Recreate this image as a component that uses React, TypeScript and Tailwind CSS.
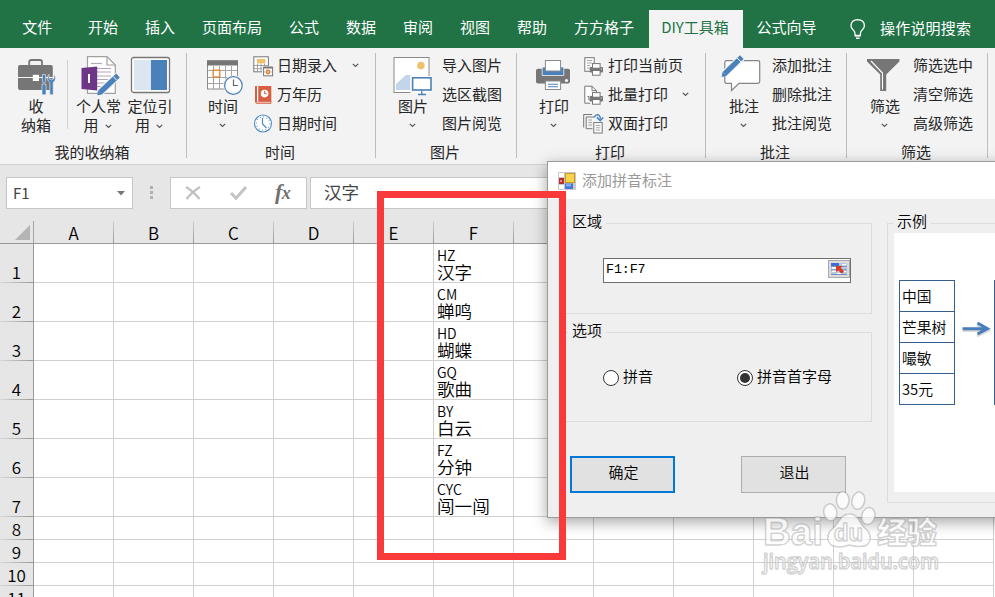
import type { ReactNode } from "react";
import clsx from "clsx";

const tabs = [
  { label: "文件", cls: "w-[74.5px]" },
  { label: "开始", cls: "w-[57px]" },
  { label: "插入", cls: "w-[57px]" },
  { label: "页面布局", cls: "w-[87px]" },
  { label: "公式", cls: "w-[57px]" },
  { label: "数据", cls: "w-[57px]" },
  { label: "审阅", cls: "w-[57px]" },
  { label: "视图", cls: "w-[57px]" },
  { label: "帮助", cls: "w-[57px]" },
  { label: "方方格子", cls: "w-[87px]" },
  { label: "DIY工具箱", cls: "w-[94px] ml-[1.5px] pr-[2px]", active: true },
  { label: "公式向导", cls: "w-[87px]" },
];

const columns = ["A", "B", "C", "D", "E", "F", "G", "H", "I", "J", "K", "L"];

const rows = [
  { n: 1, py: "HZ", text: "汉字" },
  { n: 2, py: "CM", text: "蝉鸣" },
  { n: 3, py: "HD", text: "蝴蝶" },
  { n: 4, py: "GQ", text: "歌曲" },
  { n: 5, py: "BY", text: "白云" },
  { n: 6, py: "FZ", text: "分钟" },
  { n: 7, py: "CYC", text: "闯一闯" },
  { n: 8 },
  { n: 9 },
  { n: 10 },
  { n: 11 },
];

function Chevron({ className }: { className?: string }) {
  return (
    <svg width="7" height="5" viewBox="0 0 7 5" className={clsx("shrink-0", className)}>
      <path d="M0.8 0.8 L3.5 3.5 L6.2 0.8" fill="none" stroke="#555" strokeWidth="1.2" />
    </svg>
  );
}

function Pencil({ d = "M22 36 L38 20" }: { d?: string }) {
  return (
    <>
      <path d={d} stroke="#f3f3f3" strokeWidth="7.5" />
      <path d={d} stroke="#4a81bb" strokeWidth="5.2" />
    </>
  );
}

function BigIcon({ children }: { children: ReactNode }) {
  return (
    <svg width="40" height="40" viewBox="0 0 40 40" fill="none" className="shrink-0 overflow-visible">
      {children}
    </svg>
  );
}

function SmallIcon({ children }: { children: ReactNode }) {
  return (
    <svg width="20" height="20" viewBox="0 0 20 20" fill="none" className="shrink-0 overflow-visible">
      {children}
    </svg>
  );
}

function ToolboxIcon() {
  return (
    <BigIcon>
      <path d="M13.2 9V6.2Q13.2 4 15.4 4H23.8Q26 4 26 6.2V9" stroke="#767676" strokeWidth="1.8" />
      <rect x="2" y="9" width="34.8" height="25" rx="2" fill="#767676" />
      <path d="M2 21.5H37" stroke="#f3f3f3" strokeWidth="1.2" />
      <rect x="16.8" y="18.8" width="6.2" height="6.2" fill="#fff" />
      <path d="M25 17H40V40H25Z" fill="#f3f3f3" />
      <path d="M25 17H36.8V34H25Z" fill="#767676" />
      <path d="M25 21.5H37" stroke="#f3f3f3" strokeWidth="1.2" />
      <path d="M26.4 18.5H29.6V25L28.9 26V28.5H30V38.8H26V28.5H27.1V26L26.4 25Z" fill="#4a81bb" stroke="#f3f3f3" strokeWidth="0.6" />
      <path d="M33 18.3Q31.2 20 31.5 23Q31.9 25.4 33.8 26.3V38.8H37.2V26.3Q39.4 25.2 39.5 22.5Q39.6 20 38 18.3V22.5L35.5 24L33 22.5Z" fill="#4a81bb" stroke="#f3f3f3" strokeWidth="0.6" />
    </BigIcon>
  );
}

function NoteIcon() {
  return (
    <BigIcon>
      <path d="M8.5 0.7H28L36.3 9V37.4H8.5Z" fill="#fff" stroke="#a0a0a0" strokeWidth="1.2" />
      <path d="M28 0.7V9H36.3" stroke="#a0a0a0" strokeWidth="1.2" />
      <path d="M12 7.5H23" stroke="#b3a5bb" strokeWidth="1.2" />
      <path d="M18 12.5H32M18 16H32M18 20H32M18 23.5H29M18 27H26M18 30.5H22" stroke="#b3a5bb" strokeWidth="1.2" />
      <path d="M2.5 12L18.2 10.5V34.5L2.5 33Z" fill="#6d3688" />
      <path d="M10 18V27" stroke="#fff" strokeWidth="2" />
      <Pencil d="M21 36.5L39 19.5" />
      <path d="M34.3 20.6L37.7 24.2" stroke="#fff" strokeWidth="1" />
      <path d="M19 34.5L23 38.5L18.3 39.3Z" fill="#4a81bb" />
    </BigIcon>
  );
}

function PaneIcon() {
  return (
    <BigIcon>
      <rect x="1.5" y="1.5" width="38" height="35" rx="2" fill="#fff" stroke="#767676" strokeWidth="1.3" />
      <path d="M4 4H21V34H4Z" fill="#dce6f1" />
      <path d="M21 4H37V34H21Z" fill="#4a81bb" />
    </BigIcon>
  );
}

function CalendarIcon() {
  return (
    <BigIcon>
      <rect x="4.5" y="5" width="30" height="28" fill="#fff" stroke="#8a8a8a" />
      <path d="M4 4.3H35V9.5H4Z" fill="#767676" />
      <path d="M10.5 10V33M16.5 10V33M22.5 10V33M28.5 10V33M5 14.5H34M5 21.5H34M5 27.5H34" stroke="#a3a3a3" />
      <rect x="10.2" y="14.2" width="6.6" height="6.8" fill="#fff" stroke="#e8822c" strokeWidth="1.3" />
      <circle cx="30.4" cy="29.5" r="10.2" fill="#f3f3f3" />
      <circle cx="30.4" cy="29.5" r="8.8" fill="#fff" stroke="#4a81bb" strokeWidth="1.2" />
      <path d="M30.5 23.5V29.5H35" stroke="#666" strokeWidth="1.2" />
    </BigIcon>
  );
}

function PictureIcon() {
  return (
    <BigIcon>
      <rect x="1" y="1.5" width="35" height="35" fill="#fff" stroke="#8a8a8a" />
      <circle cx="27.9" cy="9.6" r="3.8" fill="#efc16b" />
      <path d="M3 34V28L13 19H17.5V34Z" fill="#c2d5ea" />
      <path d="M17.5 20H40V39H17.5Z" fill="#f3f3f3" />
      <path d="M17.5 20H36V36.5H17.5Z" fill="#fff" />
      <rect x="19.6" y="21.8" width="18.4" height="12.2" fill="#fff" stroke="#4a81bb" strokeWidth="1.6" />
      <path d="M28.8 34V38M25 38.5H33" stroke="#4a81bb" strokeWidth="1.3" />
    </BigIcon>
  );
}

function PrinterIcon() {
  return (
    <BigIcon>
      <rect x="2" y="12.8" width="34" height="14.6" rx="2" fill="#767676" />
      <path d="M8.2 11H29.8V19.5H8.2Z" fill="#4a81bb" stroke="#f3f3f3" strokeWidth="0.8" />
      <rect x="11.4" y="4.5" width="15.2" height="10.5" fill="#fff" stroke="#8a8a8a" />
      <circle cx="32.5" cy="24.5" r="1.6" fill="#fff" />
      <rect x="11.4" y="25" width="15.2" height="8.5" fill="#fff" stroke="#8a8a8a" />
      <path d="M14 28.2H24M14 30.8H24" stroke="#4a81bb" strokeWidth="1.1" />
    </BigIcon>
  );
}

function CommentIcon() {
  return (
    <BigIcon>
      <path d="M2.5 4.7H34Q35.7 4.7 35.7 6.4V25.6Q35.7 27.3 34 27.3H15L7.5 34.5V27.3H2.5Q0.8 27.3 0.8 25.6V6.4Q0.8 4.7 2.5 4.7Z" fill="#fff" stroke="#858585" strokeWidth="1.2" />
      <Pencil d="M0.5 17.8L17.8 1.2" />
      <path d="M13 1.8L17 6" stroke="#fff" strokeWidth="1" />
      <path d="M-1.5 16L2.5 19.8L-2.3 21Z" fill="#4a81bb" />
    </BigIcon>
  );
}

function FunnelIcon() {
  return (
    <BigIcon>
      <path d="M2 3H34.4V5.5L21.2 18.5V35H15.2V18.5L2 5.5Z" fill="#767676" />
      <path d="M6 5L17.5 17V33.5" stroke="#fff" strokeWidth="1.1" />
    </BigIcon>
  );
}

function DateEntryIcon() {
  return (
    <SmallIcon>
      <rect x="0.8" y="0.8" width="14.6" height="15" fill="#fff" stroke="#767676" />
      <path d="M1 9.5H15M1 12.7H15M4.5 7.5V15.5M8 7.5V15.5M11.5 7.5V15.5" stroke="#999" strokeWidth="0.9" />
      <path d="M4 3H12.4V7.4H4Z" fill="#efc16b" />
      <path d="M9 10H20V21H9Z" fill="#f3f3f3" />
      <rect x="10.6" y="11.5" width="9" height="8.3" fill="#fff" stroke="#767676" />
      <path d="M10.5 11.5H19.7" stroke="#767676" strokeWidth="2" />
      <path d="M11 16H19.5M15 12V20" stroke="#aaa" strokeWidth="0.8" />
      <rect x="13.5" y="14.4" width="3" height="3" stroke="#e8822c" strokeWidth="1.1" />
    </SmallIcon>
  );
}

function AlmanacIcon() {
  return (
    <SmallIcon>
      <path d="M2 1.5Q2 1 2.5 1H4V16.2H18.3V18.7H3.8Q2 18.5 2 16.5Z" fill="#d65f41" />
      <path d="M5.2 1H18.3V17H5.2Z" fill="#d65f41" />
      <path d="M4.6 1V16.8" stroke="#fff" strokeWidth="0.8" />
      <path d="M3.5 17.3H17.5" stroke="#fff" strokeWidth="0.7" />
      <circle cx="11.6" cy="8.6" r="3.8" fill="#fff" />
      <path d="M11.6 6V8.7H13.8" stroke="#d65f41" strokeWidth="1" />
    </SmallIcon>
  );
}

function ClockIcon() {
  return (
    <SmallIcon>
      <circle cx="10" cy="9.5" r="8.5" fill="#fff" stroke="#4b8bc4" strokeWidth="1.1" />
      <circle cx="10" cy="9.5" r="6.6" stroke="#4b8bc4" strokeWidth="1.1" strokeDasharray="0.8 2.655" />
      <path d="M9.5 4V10L13.5 14" stroke="#4b8bc4" strokeWidth="1.2" />
    </SmallIcon>
  );
}

function MiniPrinter() {
  return (
    <>
      <path d="M4.8 10H20V20H6.5Z" fill="#f3f3f3" />
      <rect x="5.6" y="11" width="13.4" height="5.5" rx="1" fill="#767676" />
      <rect x="8.5" y="7.6" width="7.6" height="4.6" fill="#fff" stroke="#767676" />
      <rect x="8.5" y="14.5" width="7.6" height="4.7" fill="#fff" stroke="#767676" />
      <path d="M16.8 13H17.8" stroke="#fff" />
    </>
  );
}

function PrintPageIcon() {
  return (
    <SmallIcon>
      <rect x="0.8" y="1.7" width="9.4" height="13.6" fill="#fff" stroke="#767676" />
      <path d="M3 4.5H8M3 7H8M3 9.5H6M3 12H5" stroke="#999" strokeWidth="0.9" />
      <MiniPrinter />
    </SmallIcon>
  );
}

function PrintBatchIcon() {
  return (
    <SmallIcon>
      <path d="M0.8 1.2H8L12.5 5.7V18.2H0.8Z" fill="#fff" stroke="#767676" />
      <path d="M8 1.2V5.7H12.5" stroke="#767676" />
      <path d="M3.5 11.5H5V15.5" stroke="#767676" strokeWidth="1.2" />
      <MiniPrinter />
    </SmallIcon>
  );
}

function DuplexIcon() {
  return (
    <SmallIcon>
      <path d="M-0.3 13.5V0.5H8" stroke="#767676" />
      <path d="M8.5 14.7H2.2V3H10" stroke="#767676" />
      <path d="M4.5 6H8M4.5 8.5H8M4.5 11H8" stroke="#999" strokeWidth="0.9" />
      <rect x="9.8" y="8.6" width="8.4" height="10.4" fill="#fff" stroke="#767676" />
      <path d="M11.7 11.5H16.3M11.7 13.8H16.3M11.7 16.1H16.3" stroke="#999" strokeWidth="0.9" />
      <path d="M10.3 3.4Q12.5 -0.8 15.3 1.6Q16.4 2.8 16.4 4.8" stroke="#4a81bb" strokeWidth="1.4" />
      <path d="M13 3.4L16.2 6.6L19.2 3.4" stroke="#4a81bb" strokeWidth="1.5" />
    </SmallIcon>
  );
}

function BigButton({ icon, lines, className }: { icon: ReactNode; lines: string[]; className?: string }) {
  return (
    <div className={clsx("flex shrink-0 flex-col items-center whitespace-nowrap pt-2 leading-[19px]", className)}>
      {icon}
      <span>{lines[0]}</span>
      {lines[1] === undefined ? (
        <Chevron className="mr-px mt-[8px]" />
      ) : (
        <span className="flex items-center">
          {lines[1]}
          {lines[1] === "用" && <Chevron className="ml-1.5 mr-[2px] mt-1" />}
        </span>
      )}
    </div>
  );
}

function Row({ icon, label, menu }: { icon?: ReactNode; label: string; menu?: string }) {
  return (
    <div className="flex h-[29px] items-center whitespace-nowrap">
      {icon && <span className="mr-1">{icon}</span>}
      <span className="-mt-px">{label}</span>
      {menu && <Chevron className={menu} />}
    </div>
  );
}

function Group({ title, className, children }: { title: string; className: string; children: ReactNode }) {
  return (
    <div className={clsx("flex shrink-0 flex-col", className)}>
      <div className="flex min-h-0 flex-1">
        <div className="flex h-[95px] min-w-0 flex-1">{children}</div>
        <div className="mt-[5px] w-px bg-[#bdbdbd]" />
      </div>
      <div className="flex h-[15px] border-r border-[#bdbdbd]">
        <span className="flex-1 pr-[2px] text-center leading-[17px]">{title}</span>
      </div>
      <div className="h-[6px]" />
    </div>
  );
}

function Ribbon() {
  return (
    <div className="flex h-[117px] border-b border-[#d2d2d2] bg-[#f3f3f3]">
      <Group title="我的收纳箱" className="w-[187px]">
        <BigButton className="ml-1.5 w-[60px]" icon={<ToolboxIcon />} lines={["收", "纳箱"]} />
        <div className="ml-px mt-3 h-[69px] w-px bg-[#d0d0d0]" />
        <BigButton className="ml-[4.5px] w-[52px]" icon={<NoteIcon />} lines={["个人常", "用"]} />
        <BigButton className="w-[51px]" icon={<PaneIcon />} lines={["定位引", "用"]} />
      </Group>
      <Group title="时间" className="w-[189px]">
        <BigButton className="ml-[6px] w-[60px]" icon={<CalendarIcon />} lines={["时间"]} />
        <div className="pt-[3px]">
          <Row icon={<DateEntryIcon />} label="日期录入" menu="ml-[15px]" />
          <Row icon={<AlmanacIcon />} label="万年历" />
          <Row icon={<ClockIcon />} label="日期时间" />
        </div>
      </Group>
      <Group title="图片" className="w-[141px]">
        <BigButton className="ml-[8px] w-[58px]" icon={<PictureIcon />} lines={["图片"]} />
        <div className="pt-[3px]">
          <Row label="导入图片" />
          <Row label="选区截图" />
          <Row label="图片阅览" />
        </div>
      </Group>
      <Group title="打印" className="w-[189px]">
        <BigButton className="ml-[8px] w-[58px]" icon={<PrinterIcon />} lines={["打印"]} />
        <div className="pl-px pt-[3px]">
          <Row icon={<PrintPageIcon />} label="打印当前页" />
          <Row icon={<PrintBatchIcon />} label="批量打印" menu="ml-[14px]" />
          <Row icon={<DuplexIcon />} label="双面打印" />
        </div>
      </Group>
      <Group title="批注" className="w-[141px]">
        <BigButton className="ml-[10px] w-[56px]" icon={<CommentIcon />} lines={["批注"]} />
        <div className="pt-[3px]">
          <Row label="添加批注" />
          <Row label="删除批注" />
          <Row label="批注阅览" />
        </div>
      </Group>
      <Group title="筛选" className="w-[141px]">
        <BigButton className="ml-[10px] w-[56px]" icon={<FunnelIcon />} lines={["筛选"]} />
        <div className="pt-[3px]">
          <Row label="筛选选中" />
          <Row label="清空筛选" />
          <Row label="高级筛选" />
        </div>
      </Group>
    </div>
  );
}

function FormulaBar() {
  return (
    <div className="flex h-[56px] bg-[#e6e6e6] pl-1.5 pt-3 text-[#444]">
      <div className="flex h-8 w-[127px] items-center justify-between border border-[#c6c6c6] bg-white pl-1.5 pr-[7px]">
        <span>F1</span>
        <svg width="8" height="5" viewBox="0 0 8 5">
          <path d="M0 0H8L4 4.5Z" fill="#777" />
        </svg>
      </div>
      <div className="ml-[17px] mt-[9px] flex flex-col gap-[2px]">
        <i className="size-[3px] bg-[#b0b0b0]" />
        <i className="size-[3px] bg-[#b0b0b0]" />
        <i className="size-[3px] bg-[#b0b0b0]" />
      </div>
      <div className="ml-[17px] flex h-8 w-[137px] items-center border border-[#c6c6c6] bg-white">
        <svg width="16" height="14" viewBox="0 0 16 14" fill="none" className="ml-[14px]">
          <path d="M1 1Q8 5 14.5 13M15 1Q8 5 1.5 13" stroke="#c0c0c0" strokeWidth="2.2" />
        </svg>
        <svg width="17" height="14" viewBox="0 0 17 14" fill="none" className="ml-[29px]">
          <path d="M1 7L6 12.2L16 1" stroke="#c4c4c4" strokeWidth="3" />
        </svg>
        <span className="-mt-[3px] ml-[28px] font-['Liberation_Serif',serif] text-[22px] font-bold italic leading-none tracking-[-0.5px] text-[#707070]">
          f<span className="text-[18px]">x</span>
        </span>
      </div>
      <div className="ml-[3px] flex h-8 flex-1 items-center border border-r-0 border-[#c6c6c6] bg-white pb-0.5 pl-[13px] text-[17.6px]">汉字</div>
    </div>
  );
}

function Sheet() {
  return (
    <div className="font-['Noto_Sans_CJK_SC',sans-serif] font-[350] text-black">
      <div className="flex h-[23px] w-[1010px] border-b border-[#999] bg-[#e6e6e6]">
        <div className="flex w-[34px] shrink-0 justify-end border-r border-[#a6a6a6] pr-[3px] pt-1">
          <svg width="15" height="15" viewBox="0 0 15 15">
            <path d="M15 0V15H0Z" fill="#b4b4b4" />
          </svg>
        </div>
        {columns.map((c) => (
          <div key={c} className="flex w-20 shrink-0">
            <span className="flex-1 text-center text-[17px] leading-[24px]">{c}</span>
            <i className="w-px bg-linear-to-b from-[#d0d0d0] to-[#999]" />
          </div>
        ))}
      </div>
      {rows.map((r) => (
        <div key={r.n} className={clsx("flex w-[1010px]", r.py ? "h-[39px]" : "h-[23px]")}>
          <div className="flex w-[34px] shrink-0 flex-col justify-end border-r border-[#999] bg-[#e6e6e6]">
            <span className="text-center text-[17px] leading-[20px]">{r.n}</span>
            <i className="h-px bg-linear-to-r from-[#d8d8d8] to-[#999]" />
          </div>
          {columns.map((c) => (
            <div key={c} className="flex w-20 shrink-0 flex-col border-b border-r border-[#d0d0d0] bg-white pl-[3px]">
              {c === "F" && r.py && (
                <>
                  <span className="pt-[3px] text-[14px] leading-[16px]">{r.py}</span>
                  <span className="text-[17.6px] leading-[18px]">{r.text}</span>
                </>
              )}
            </div>
          ))}
        </div>
      ))}
    </div>
  );
}

function GroupBox({ title, className, children }: { title: string; className: string; children?: ReactNode }) {
  return (
    <div className={clsx("flex flex-col border border-[#dcdcdc]", className)}>
      <span className="-mt-[14px] mb-px ml-[5px] self-start bg-[#efefef] px-1 leading-[22px]">{title}</span>
      {children}
    </div>
  );
}

function Radio({ label, checked }: { label: string; checked?: boolean }) {
  return (
    <div className="flex items-center gap-1">
      <span className="mt-0.5 flex size-4 items-center justify-center rounded-full border border-[#333] bg-white">
        {checked && <i className="size-2.5 rounded-full bg-[#333]" />}
      </span>
      <span className="-mt-0.5">{label}</span>
    </div>
  );
}

function PinyinDialog() {
  return (
    <div className="absolute left-[547px] top-[161px] flex h-[357px] w-[470px] flex-col border border-[#9b9b9b] bg-[#efefef] font-[350] text-black shadow-[0_4px_14px_rgba(0,0,0,0.36)]">
      <div className="flex h-[37px] shrink-0 items-center bg-white pl-2.5 font-normal text-[#999]">
        <svg width="18" height="18" viewBox="0 0 18 18">
          <rect width="18" height="18" rx="1" fill="#c9c9c9" />
          <path d="M1 1H6V5H1ZM1 13H6V17H1Z" fill="#fff" />
          <rect x="7" y="1" width="10" height="10" fill="#c79a20" />
          <rect x="8" y="2" width="8" height="8" fill="#fcd44a" />
          <rect x="1" y="6" width="5" height="6" fill="#b5302a" />
          <rect x="2" y="8" width="2" height="2" fill="#ee8a80" />
          <rect x="7" y="11.5" width="8" height="5.5" fill="#4479dc" />
          <rect x="8" y="12.3" width="5" height="2" fill="#8db4f5" />
        </svg>
        <span className="ml-1.5">添加拼音标注</span>
      </div>
      <div className="flex flex-1">
        <div className="w-[339px] shrink-0">
          <GroupBox title="区域" className="ml-[14px] mt-6 h-[91px] w-[310px]">
            <div className="ml-10 mt-[25px] flex h-[25px] w-[248px] border border-[#6e6e6e] bg-white">
              <span className="flex-1 pl-[2px] font-['Liberation_Mono',monospace] text-[13.3px] leading-[21px] tracking-[-0.1px]">F1:F7</span>
              <div className="mt-px flex h-[18px] w-[22px] items-center justify-center border border-[#a8a8a8] bg-[#dcdcdc]">
                <svg width="16" height="12" viewBox="0 0 16 12">
                  <rect width="16" height="12" fill="#b9c6dc" />
                  <path d="M0 0H8V3H0Z" fill="#3c6fd4" />
                  <path d="M1 4H5V6H1ZM1 7.5H5V9H1ZM11 1H15V2.5H11ZM12 7.5H15V9H12ZM6 10H11V11.5H6Z" fill="#fff" />
                  <path d="M0 6.8H16M0 11.5H16M0 3.3H16" stroke="#5a7fbd" strokeWidth="0.8" />
                  <path d="M5 3H11.5L9.8 4.8L13 8.5L10.5 10.8L7.3 7.2L5 9Z" fill="#d93a22" />
                </svg>
              </div>
            </div>
          </GroupBox>
          <GroupBox title="选项" className="ml-[14px] mt-[18px] h-[90px] w-[310px]">
            <div className="ml-10 mt-[25px] flex">
              <div className="w-[134px]">
                <Radio label="拼音" />
              </div>
              <Radio label="拼音首字母" checked />
            </div>
          </GroupBox>
          <div className="ml-[22px] mt-[34px] flex gap-[66px]">
            <button className="h-[37px] w-[105px] border-2 border-[#0078d7] bg-[#e1e1e1] pb-1 pl-0.5">确定</button>
            <button className="h-[37px] w-[105px] border border-[#adadad] bg-[#e1e1e1] pb-1 pl-0.5">退出</button>
          </div>
        </div>
        <GroupBox title="示例" className="mt-6 h-[280px] w-[160px] shrink-0">
          <div className="ml-1.5 flex h-[259px] items-start bg-white pl-[5px] pt-[47px]">
            <div className="w-14 shrink-0 border border-b-0 border-[#365f91] text-[14.8px]">
              {["中国", "芒果树", "嘬敏", "35元"].map((t) => (
                <div key={t} className="h-[31px] whitespace-nowrap border-b border-[#365f91] pl-[2px] leading-[29px]">
                  {t}
                </div>
              ))}
            </div>
            <svg width="30" height="18" viewBox="0 0 30 18" fill="none" className="ml-[6px] mt-[40px] shrink-0">
              <path d="M2 10.5H27M16 5L27 10.5L16 16" stroke="#000" strokeOpacity="0.15" strokeWidth="3" />
              <path d="M1.5 8.7H26M16.5 3L26.5 8.7L16.5 14" stroke="#4a7ebb" strokeWidth="3" />
            </svg>
            <div className="ml-[3px] h-[125px] w-14 border border-[#365f91]" />
          </div>
        </GroupBox>
      </div>
    </div>
  );
}

function Watermark() {
  return (
    <svg width="195" height="100" viewBox="0 0 195 100" className="absolute left-[755px] top-[485px]">
      <g fill="#fff" fillOpacity="0.75" stroke="#8a8a8a" strokeOpacity="0.38" strokeWidth="1.5" strokeLinejoin="round">
        <text x="8" y="60" fontFamily="Liberation Sans" fontWeight="700" fontSize="39" textLength="60" lengthAdjust="spacingAndGlyphs">
          Bai
        </text>
        <ellipse cx="75.3" cy="27.3" rx="6.5" ry="8.5" transform="rotate(-10 75.3 27.3)" />
        <ellipse cx="87.7" cy="15.3" rx="6.3" ry="8.7" />
        <ellipse cx="103.3" cy="15.7" rx="6.3" ry="8.7" transform="rotate(12 103.3 15.7)" />
        <ellipse cx="113.3" cy="31" rx="6.5" ry="8.5" transform="rotate(15 113.3 31)" />
        <path d="M94 29Q101 28 105 37Q108 42 113 46Q118 54 112 60Q105 63 94 60Q84 64 76 60Q70 54 75 46Q80 42 84 36Q88 29 94 29Z" />
        <text x="122" y="58" fontFamily="Noto Sans CJK SC" fontWeight="900" fontSize="30">
          经验
        </text>
        <text x="8" y="84" fontFamily="Open Sans" fontWeight="600" fontSize="21" textLength="176" lengthAdjust="spacingAndGlyphs">
          jingyan.baidu.com
        </text>
        <text x="79" y="56" fontFamily="Liberation Sans" fontWeight="700" fontSize="24" textLength="29" lengthAdjust="spacingAndGlyphs">
          du
        </text>
      </g>
    </svg>
  );
}

export default function App() {
  return (
    <div className="relative h-[597px] w-[995px] overflow-hidden bg-white font-['Noto_Sans_CJK_SC',sans-serif] text-[15px] text-[#262626]">
      <div className="flex h-12 bg-[#217346] text-white">
        {tabs.map((t) => (
          <div
            key={t.label}
            className={clsx(
              "flex shrink-0 items-center justify-center whitespace-nowrap",
              t.cls,
              t.active ? "mt-2.5 bg-[#f3f3f3] pb-[3px] text-[#217346]" : "pt-[7px]",
            )}
          >
            {t.label}
          </div>
        ))}
        <svg width="16" height="21" viewBox="0 0 16 21" fill="none" stroke="#fff" strokeWidth="1.3" className="ml-5 mt-[19px] shrink-0">
          <path d="M5 14.5Q5 12.5 3 10.8Q1 9 1 6.8Q1.3 0.8 7.7 0.7Q14.2 0.8 14.4 6.8Q14.4 9 12.4 10.8Q10.4 12.5 10.4 14.5V16.5H5Z" />
          <path d="M5 16.7H10.4M6 19.2H9.5" strokeWidth="1.5" />
        </svg>
        <span className="ml-[14px] whitespace-nowrap pt-[17px] leading-[22px] tracking-[0.2px]">操作说明搜索</span>
      </div>
      <Ribbon />
      <FormulaBar />
      <Sheet />
      <PinyinDialog />
      <div className="absolute left-[377px] top-[191px] h-[369px] w-[189px] border-[7px] border-[#fa3a3a]" />
      <Watermark />
    </div>
  );
}
